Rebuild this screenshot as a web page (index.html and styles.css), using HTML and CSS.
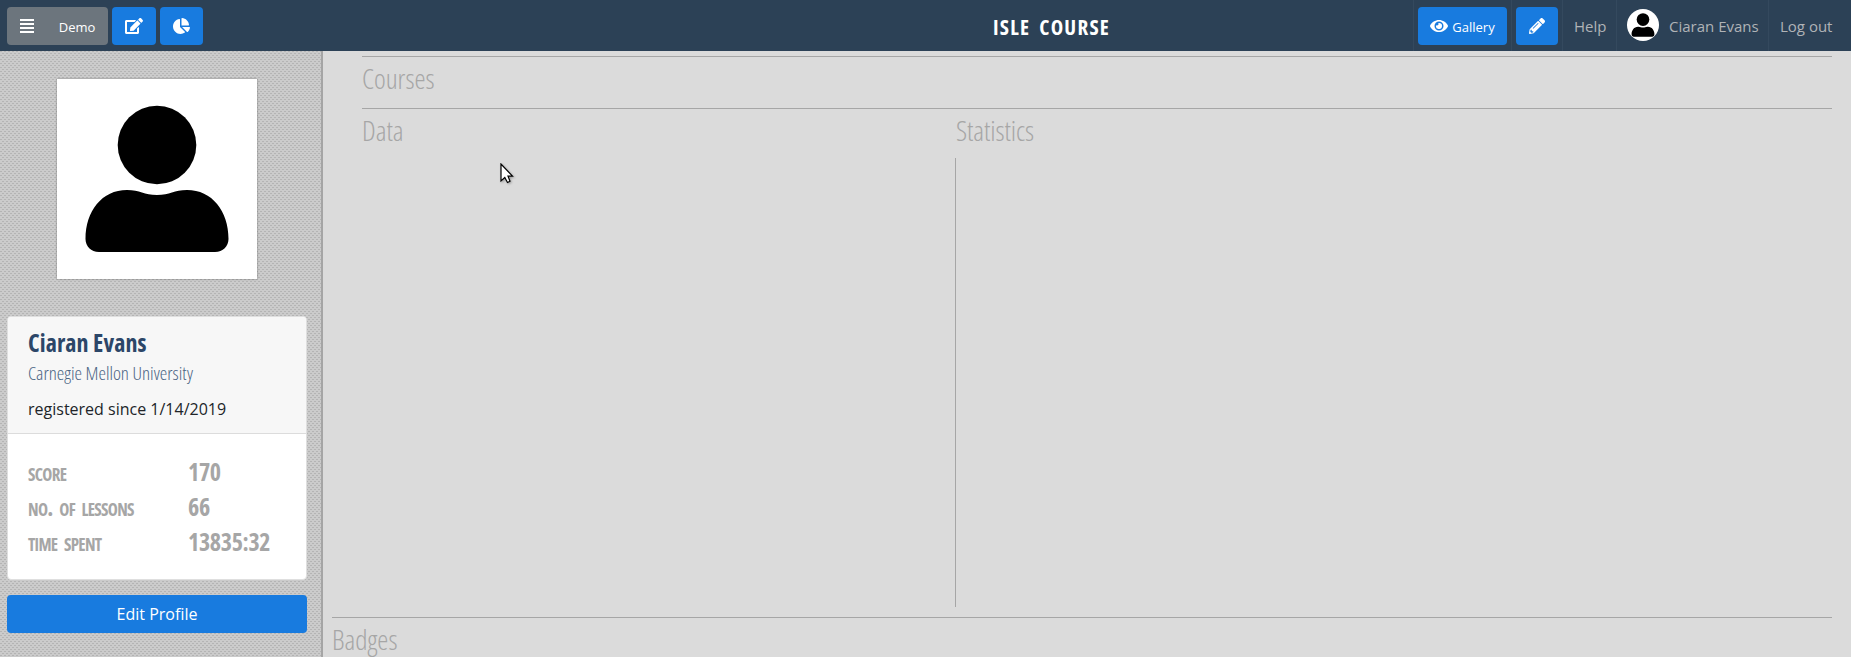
FILE: index.html
```
<!DOCTYPE html>
<html lang="en">
<head>
<meta charset="utf-8">
<title>ISLE Course</title>
<link rel="stylesheet" href="styles.css">
</head>
<body>
<header class="topbar">
  <div class="tools">
    <button class="btn demo"><svg width="14" height="14" viewBox="0 0 14 14"><path fill="#fff" d="M0 0h14v2H0zM0 4h14v2H0zM0 8h14v2H0zM0 12h14v2H0z"/></svg><span>Demo</span></button>
    <button class="btn edit"><svg width="18" height="16" viewBox="0 0 576 512"><path fill="#fff" d="M402.600 83.200l90.200 90.200c3.800 3.800 3.800 10 0 13.800L274.400 405.600l-92.800 10.300c-12.400 1.400-22.900-9.100-21.500-21.500l10.300-92.800L388.800 83.200c3.800-3.800 10-3.800 13.800 0zm162-22.900l-48.800-48.800c-15.200-15.200-39.900-15.200-55.200 0l-35.400 35.400c-3.800 3.800-3.800 10 0 13.800l90.200 90.200c3.800 3.800 10 3.800 13.800 0l35.400-35.400c15.200-15.300 15.200-40 0-55.200zM384 346.200V448H64V128h229.800c3.200 0 6.200-1.300 8.500-3.500l40-40c7.600-7.600 2.200-20.500-8.500-20.500H48C21.500 64 0 85.500 0 112v352c0 26.500 21.500 48 48 48h352c26.500 0 48-21.500 48-48V306.200c0-10.700-12.900-16-20.500-8.500l-40 40c-2.200 2.300-3.500 5.300-3.500 8.500z"/></svg></button>
    <button class="btn chart"><svg width="17" height="16" viewBox="0 0 544 512"><path fill="#fff" d="M527.790 288H290.500l158.030 158.030c6.040 6.040 15.980 6.530 22.190.68 38.700-36.460 65.320-85.610 73.130-140.860 1.340-9.460-6.510-17.850-16.060-17.850zm-15.830-64.800C503.720 103.740 408.260 8.280 288.800.04 279.680-.59 272 7.100 272 16.240V240h223.770c9.140 0 16.820-7.680 16.190-16.800zM224 288V50.710c0-9.550-8.390-17.400-17.840-16.060C86.990 51.490-4.100 155.600.14 280.370 4.500 408.510 114.830 513.590 243.030 511.980c50.400-.63 96.970-16.870 135.260-44.030 7.900-5.600 8.420-17.230 1.570-24.080L224 288z"/></svg></button>
  </div>
  <div class="title">ISLE COURSE</div>
  <nav class="links">
    <div class="cell gallery-cell"><button class="btn gallery"><svg width="18" height="16" viewBox="0 0 576 512"><path fill="#fff" d="M572.520 241.400C518.290 135.590 410.930 64 288 64S57.680 135.640 3.480 241.410a32.350 32.350 0 0 0 0 29.190C57.710 376.410 165.070 448 288 448s230.320-71.640 284.520-177.410a32.350 32.350 0 0 0 0-29.190zM288 400a144 144 0 1 1 144-144 143.930 143.930 0 0 1-144 144zm0-240a95.310 95.310 0 0 0-25.310 3.790 47.850 47.850 0 0 1-66.900 66.900A95.780 95.780 0 1 0 288 160z"/></svg><span>Gallery</span></button></div>
    <div class="cell pencil-cell"><button class="btn pencil"><svg width="16" height="16" viewBox="0 0 512 512"><path fill="#fff" fill-rule="evenodd" d="M497.900 142.100l-46.100 46.100c-4.700 4.700-12.300 4.700-17 0l-111-111c-4.700-4.700-4.700-12.300 0-17l46.100-46.100c18.700-18.700 49.100-18.700 67.900 0l60.100 60.100c18.800 18.700 18.800 49.100 0 67.900zM284.200 99.800L21.600 362.400.4 483.900c-2.900 16.400 11.400 30.600 27.800 27.800l121.500-21.300 262.600-262.600c4.700-4.700 4.700-12.300 0-17l-111-111c-4.800-4.700-12.400-4.700-17.100 0zM124.100 339.900c-5.500-5.500-5.500-14.300 0-19.800l154-154c5.500-5.500 14.300-5.500 19.800 0s5.500 14.300 0 19.800l-154 154c-5.500 5.500-14.300 5.500-19.800 0zM88 424h48v36.300l-64.500 11.300-31.100-31.100L51.700 376H88v48z"/></svg></button></div>
    <a class="cell help">Help</a>
    <a class="cell user"><svg class="avatar" width="32" height="32" viewBox="0 0 200 200"><rect width="200" height="200" fill="#fff"/><circle cx="100" cy="66" r="39.500"/><path d="M41 173Q28 172 28.500 158C29 134 44 111 69 111C83 110 88 116 100 116S117 110 131 111C156 111 171 134 171.500 158Q172 171 159 173Z"/></svg><span>Ciaran Evans</span></a>
    <a class="cell logout">Log out</a>
  </nav>
</header>
<main class="page">
  <aside class="sidebar">
    <svg class="portrait" width="200" height="200" viewBox="0 0 200 200"><rect width="200" height="200" fill="#fff"/><circle cx="100" cy="66" r="39.300"/><path d="M42 173C34 173 28.500 167 28.500 160C28.500 132 45 111 70 111C83 111 87 116 100 116S117 111 130 111C155 111 171.500 132 171.500 160C171.500 167 166 173 158 173Z"/></svg>
    <section class="card">
      <div class="card-head">
        <h1 class="name">Ciaran Evans</h1>
        <div class="school">Carnegie Mellon University</div>
        <div class="since">registered since 1/14/2019</div>
      </div>
      <dl class="stats">
        <dt>score</dt><dd>170</dd>
        <dt>no. of lessons</dt><dd>66</dd>
        <dt>time spent</dt><dd>13835:32</dd>
      </dl>
    </section>
    <button class="profile">Edit Profile</button>
  </aside>
  <div class="content">
    <section class="courses"><h2>Courses</h2></section>
    <div class="panels">
      <section class="data"><h2>Data</h2></section>
      <section class="statistics"><h2>Statistics</h2><div class="plot"></div></section>
    </div>
    <section class="badges"><h2>Badges</h2></section>
  </div>
</main>
<svg class="cursor" width="16" height="22" viewBox="0 0 16 22"><path d="M1 1V18L4.800 14.500L7.500 19.500L10 18.200L8 13.200H12.500Z" fill="#fff" stroke="#000" stroke-width="1.200"/></svg>
</body>
</html>
```
FILE: styles.css
```
* { box-sizing: border-box; }
body { margin: 0; height: 657px; overflow: hidden; background: #dbdbdb; color: #212529; font: 16px/24px "Open Sans", sans-serif; display: flex; flex-direction: column; }
h1, h2, dl, dd { margin: 0; }
button { border: 0; padding: 0; color: #fff; font: inherit; }

.topbar { height: 51px; flex: none; background: #2c4156; display: grid; grid-template: 51px / 993px auto 1fr; }
.tools { display: flex; gap: 4px; padding: 7px 0 0 7px; }
.btn { height: 38px; border-radius: 4px; background: #187bdf; display: flex; align-items: center; justify-content: center; font-size: 13px; }
.btn span { padding-top: 2px; }
.demo { width: 101px; background: #6c757d; gap: 25px; }
.edit { width: 44px; }
.chart { width: 43px; }
.title { color: #fff; font-size: 21px; font-weight: 700; font-stretch: 75%; letter-spacing: 1.250px; word-spacing: 4px; line-height: 54px; }
.links { display: flex; justify-content: flex-end; padding-right: 9px; color: #b0b3b6; font-size: 15px; }
.cell { display: flex; align-items: center; border-left: 1px solid #34495e; }
.gallery-cell { width: 98px; padding: 0 4px; }
.gallery { width: 89px; gap: 4px; }
.pencil-cell { width: 51px; padding-left: 4px; }
.pencil { width: 42px; }
.help { width: 54px; padding-left: 11px; }
.user { width: 152px; padding-left: 10px; gap: 10px; }
.avatar { border-radius: 50%; margin-top: -2px; }
.logout { width: 74px; padding-left: 11px; }

.page { flex: 1; min-height: 0; display: flex; }
.sidebar { width: 323px; border-right: 2px solid #a5a5a5; padding: 28px 14px 0 7px; display: flex; flex-direction: column; background-color: #cbcbcb; background-image: conic-gradient(from 0deg at 2px 1px, transparent 270deg, #b4b4b4 270deg), conic-gradient(from 0deg at 2px 1px, transparent 270deg, #b4b4b4 270deg); background-size: 4px 4px; background-position: 0 0, 2px 2px; }
.portrait { align-self: center; flex: none; box-shadow: 0 0 2px rgba(0,0,0,.4); }
.card { margin-top: 37px; height: 264px; background: #fff; border: 1px solid #dfdfdf; border-radius: 4px; overflow: hidden; }
.card-head { height: 117px; background: #f7f7f7; border-bottom: 1px solid #dcdcdc; padding: 11px 20px; }
.name { color: #2c4668; font-size: 24px; line-height: 30px; font-stretch: 75%; letter-spacing: .1px; }
.school { color: #4b6584; font-size: 19px; font-weight: 300; line-height: 31px; font-stretch: 75%; }
.since { margin-top: 7px; line-height: 26px; }
.stats { display: grid; grid-template-columns: 160px 1fr; grid-auto-rows: 35px; padding: 20px 20px; color: #a6a6a6; font-weight: 700; font-stretch: 75%; line-height: 35px; font-size: 24px; }
.stats dt { font-variant: small-caps; letter-spacing: -.7px; word-spacing: 3px; }
.stats dd { letter-spacing: -.35px; }
.profile { margin-top: 15px; height: 38px; background: #187bdf; border-radius: 4px; }

.content { flex: 1; padding: 5px 19px 0 9px; display: flex; flex-direction: column; }
h2 { color: #a6a6a6; font-size: 28px; font-weight: 300; font-stretch: 75%; line-height: 36px; }
.courses, .panels { margin-left: 30px; border-top: 1px solid #a6a6a6; }
.courses { height: 52px; flex: none; padding-top: 3px; }
.panels { height: 509px; flex: none; padding-top: 3px; display: grid; grid-template-columns: 593px 1fr; }
.plot { margin-top: 10px; height: 449px; border-left: 1px solid #a6a6a6; }
.statistics h2 { padding-left: 1px; letter-spacing: -.1px; }
.badges { border-top: 1px solid #a6a6a6; padding-top: 3px; }
.cursor { position: absolute; left: 500px; top: 163px; filter: drop-shadow(1px 1px 1px rgba(0,0,0,.3)); }
```
